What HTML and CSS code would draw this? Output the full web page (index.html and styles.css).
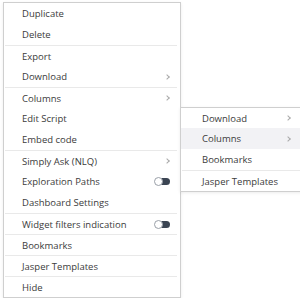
FILE: index.html
```html
<!DOCTYPE html>
<html lang="en">
<head>
    <meta charset="UTF-8">
    <meta name="viewport" content="width=device-width, initial-scale=1.0">
    <title>Widget menu</title>
    <link rel="stylesheet" href="styles.css">
</head>
<body>
    <ul class="menu main-menu">
        <li class="item">Duplicate</li>
        <li class="item">Delete</li>
        <li class="item sep">Export</li>
        <li class="item">Download <span class="chev"></span></li>
        <li class="item sep">Columns <span class="chev"></span></li>
        <li class="item">Edit Script</li>
        <li class="item">Embed code</li>
        <li class="item sep">Simply Ask (NLQ) <span class="chev"></span></li>
        <li class="item">Exploration Paths <span class="toggle"></span></li>
        <li class="item">Dashboard Settings</li>
        <li class="item sep">Widget filters indication <span class="toggle"></span></li>
        <li class="item sep">Bookmarks</li>
        <li class="item sep">Jasper Templates</li>
        <li class="item sep">Hide</li>
    </ul>

    <ul class="menu sub-menu">
        <li class="item">Download <span class="chev"></span></li>
        <li class="item active">Columns <span class="chev"></span></li>
        <li class="item">Bookmarks</li>
        <li class="item sep">Jasper Templates</li>
    </ul>
</body>
</html>
```

FILE: styles.css
```css
body {
    margin: 0;
    font-family: "Open Sans", "Liberation Sans", sans-serif;
    font-size: 9.5px;
    color: #3b3b3b;
    background: #fff;
}
.menu {
    list-style: none;
    margin: 0;
    padding: 0;
    background: #fff;
    border: 1px solid #cfcfcf;
    box-shadow: 0 1px 3px rgba(0, 0, 0, 0.08);
}
.main-menu {
    width: 176px;
    margin: 2px 0 0 3px;
}
.sub-menu {
    position: absolute;
    left: 180px;
    top: 107px;
    width: 130px;
}
.item {
    position: relative;
    display: flex;
    align-items: center;
    justify-content: space-between;
    height: 21px;
    padding: 0 10px 0 18px;
}
.sub-menu .item {
    padding-left: 21px;
    padding-right: 20px;
}
.sub-menu .item:first-child {
    height: 20px;
}
.item.sep::before {
    content: "";
    position: absolute;
    top: 0;
    left: 1px;
    right: 3px;
    border-top: 1px solid #e9e9e9;
}
.item.sep {
    padding-top: 1px;
    height: 20px;
}
.item.active {
    background: #f2f2f5;
}
.chev {
    width: 3px;
    height: 3px;
    border-top: 1px solid #a9a9a9;
    border-right: 1px solid #a9a9a9;
    transform: rotate(45deg);
    margin-right: 1px;
}
.toggle {
    position: relative;
    width: 15px;
    height: 7px;
    border-radius: 4px;
    background: #3a4452;
}
.toggle::after {
    content: "";
    position: absolute;
    left: -1px;
    top: -1px;
    width: 7px;
    height: 7px;
    border-radius: 50%;
    background: #fff;
    border: 1px solid #9aa0a8;
}
```
